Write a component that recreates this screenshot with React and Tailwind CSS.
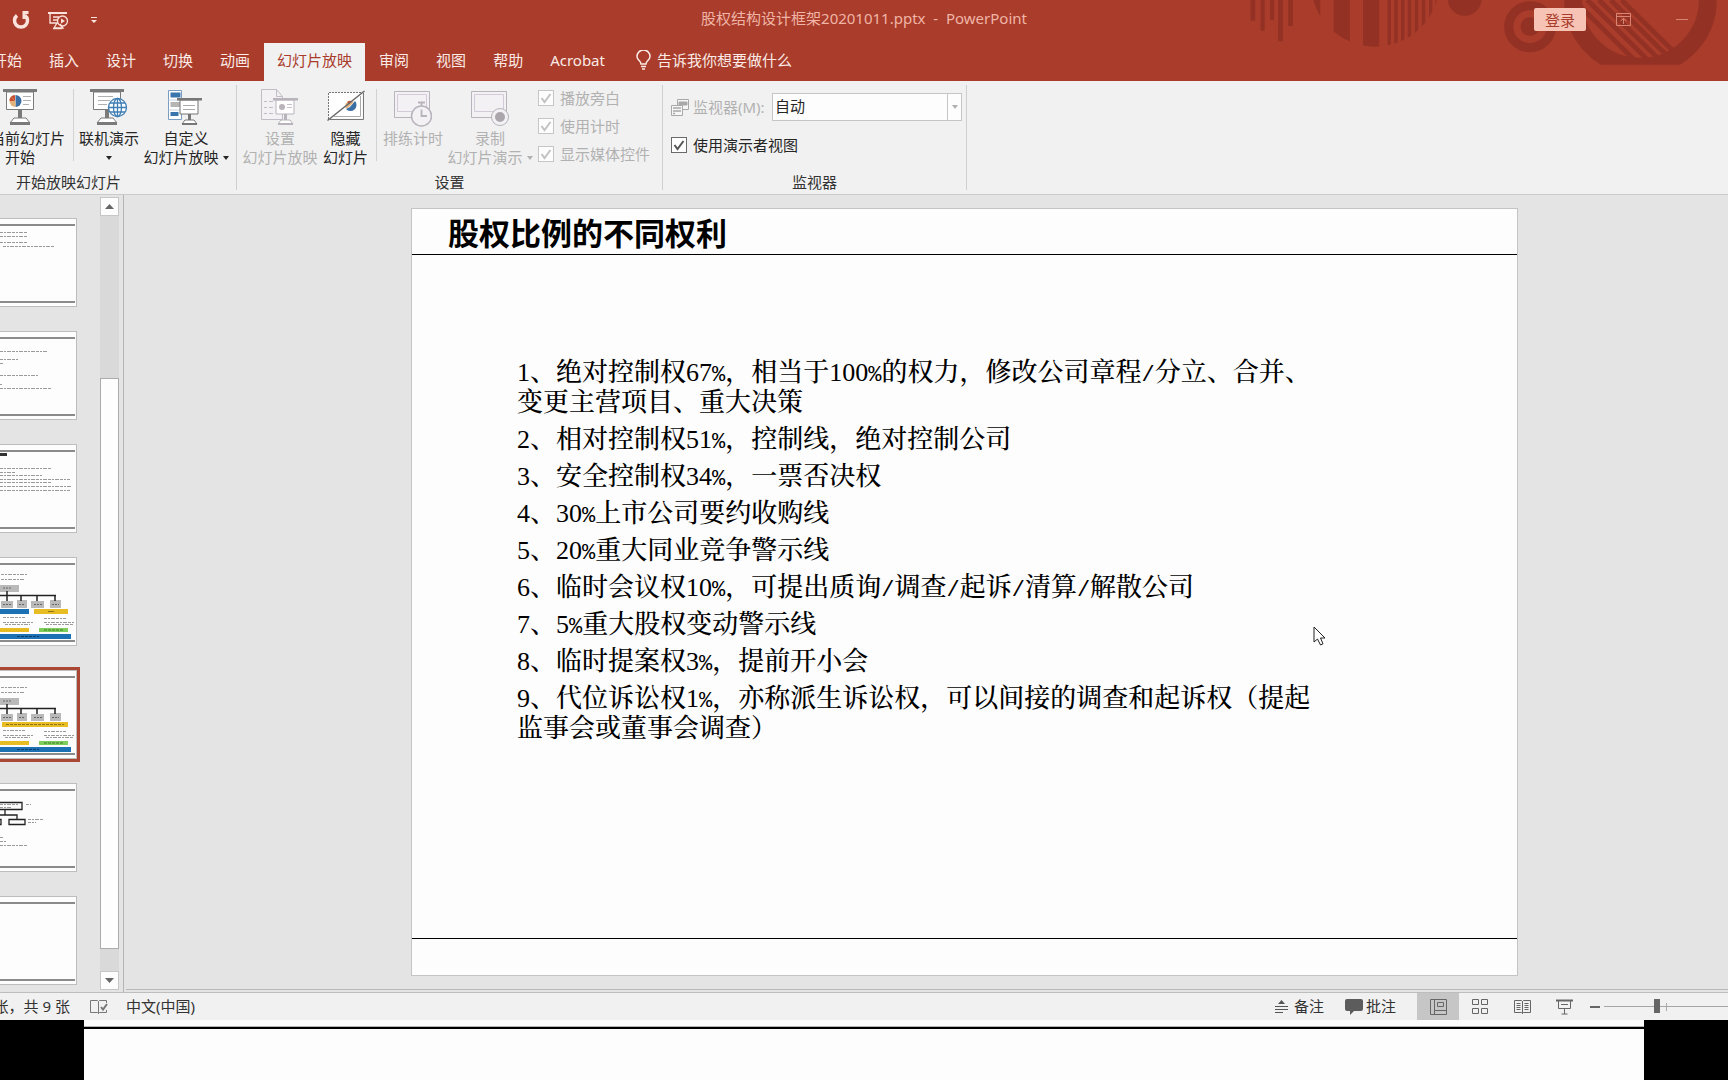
import { useState } from 'react';

const TABS = ['开始', '插入', '设计', '切换', '动画', '幻灯片放映', '审阅', '视图', '帮助', 'Acrobat'];

const POINTS = [
  '1、绝对控制权67%，相当于100%的权力，修改公司章程/分立、合并、变更主营项目、重大决策',
  '2、相对控制权51%，控制线，绝对控制公司',
  '3、安全控制权34%，一票否决权',
  '4、30%上市公司要约收购线',
  '5、20%重大同业竞争警示线',
  '6、临时会议权10%，可提出质询/调查/起诉/清算/解散公司',
  '7、5%重大股权变动警示线',
  '8、临时提案权3%，提前开小会',
  '9、代位诉讼权1%，亦称派生诉讼权，可以间接的调查和起诉权（提起监事会或董事会调查）',
];

// Half-width percent sign and slash, as in a Song typeface
const Point = ({ text }) => (
  <li>
    {text.split(/([%/])/).map((part, i) =>
      part === '%' || part === '/' ? (
        <span key={i} className="font-['Liberation_Mono'] text-[22px] leading-[16px] font-normal">{part}</span>
      ) : (
        part
      )
    )}
  </li>
);

const HeaderArt = () => (
  <svg className="absolute top-0 right-0" width="528" height="66" viewBox="0 0 1568 198" preserveAspectRatio="none" fill="#933124" aria-hidden="true">
    <defs>
      <clipPath id="disc"><circle cx="520" cy="-50" r="190" /></clipPath>
      <clipPath id="wheel"><circle cx="1308" cy="5" r="176" /></clipPath>
      <clipPath id="band"><rect x="1000" y="0" width="568" height="194" /></clipPath>
    </defs>
    <path d="M150 0h14v62h-14zM180 0h12v92h-12zM208 0h12v60h-12zM232 0h14v124h-14zM262 0h14v78h-14z" />
    <path clipPath="url(#disc)" d="M330 0h27v140h-27zM397 0h48v140h-48zM484 0h48v160h-48zM557 0h10v160h-10zM577 0h10v160h-10zM597 0h10v160h-10zM617 0h10v160h-10zM638 0h10v160h-10zM659 0h10v160h-10zM680 0h10v160h-10zM699 0h10v160h-10z" />
    <circle cx="786" cy="-3" r="50" />
    <circle cx="980" cy="80" r="28" />
    <circle cx="980" cy="80" r="63" fill="none" stroke="#933124" strokeWidth="27" />
    <g clipPath="url(#band)">
      <circle cx="1308" cy="0" r="200" fill="none" stroke="#933124" strokeWidth="53" />
      <g clipPath="url(#wheel)" stroke="#933124" strokeWidth="14">
        <path d="M1110 0L1300 190M1150 0L1335 185M1185 0L1370 185M1220 0L1405 185M1252 0L1437 185" />
      </g>
    </g>
  </svg>
);

const Board = ({ children }) => (
  <g>
    <path d="M3.500 3h27v17.500h-27z" fill="#fff" stroke="#7a7a7a" />
    <path d="M0 0h34v3H0z" fill="#7a7a7a" />
    <path d="M15 21h4v8h-4z" fill="#7a7a7a" />
    <path d="M11 29h12l4 5H7z" fill="#fff" stroke="#7a7a7a" />
    <path d="M7 33h20v3H7z" fill="#7a7a7a" />
    {children}
  </g>
);

const FromCurrentIcon = () => (
  <svg width="34" height="36" viewBox="0 0 34 36">
    <Board>
      <path d="M12 12L8 7.500A6 6 0 0 1 12 6z" fill="#c8502f" />
      <path d="M12 12H6.500a6 6 0 0 1 1.500-4.500z" fill="#c8502f" />
      <path d="M12.500 12V6a6 6 0 0 1 0 12z" fill="#3a6ea5" />
      <path d="M12.500 12v6a6 6 0 0 1-6-6z" fill="#e3b27a" />
      <path d="M20 7.500h8M20 11.500h8M20 15.500h6" stroke="#b0b0b0" />
    </Board>
  </svg>
);

const OnlineIcon = () => (
  <svg width="38" height="36" viewBox="0 0 38 36">
    <Board>
      <path d="M8 7.500h15M8 11.500h12M8 15.500h9" stroke="#b0b0b0" />
    </Board>
    <g fill="#fff" stroke="#3f7fb5" strokeWidth="1.300">
      <circle cx="27.500" cy="18.500" r="9" />
      <ellipse cx="27.500" cy="18.500" rx="4" ry="9" fill="none" />
      <path d="M18.500 18.500h18M27.500 9.500v18M20 14h15M20 23h15" />
    </g>
  </svg>
);

const SmallBoard = ({ x, y, stroke, children }) => (
  <g transform={`translate(${x} ${y})`}>
    <path d="M3 2h18v14H3z" fill="#fff" stroke={stroke} />
    <path d="M0 0h25v2.500H0z" fill={stroke} />
    <path d="M11 16h3v6h-3z" fill={stroke} />
    <path d="M8 22h9l3 4H5z" fill="#fff" stroke={stroke} />
    <path d="M5 25h15v2H5z" fill={stroke} />
    {children}
  </g>
);

const CustomShowIcon = () => (
  <svg width="36" height="36" viewBox="0 0 36 36">
    <path d="M.5 1.500h13v29H.5z" fill="#fff" stroke="#7a9cc0" />
    <path d="M.5 11h13M.5 21h13" stroke="#c5d2e0" />
    <path d="M2.500 3.500h10v5h-10zM2.500 23h8v4h-8z" fill="#3a74ad" />
    <path d="M2.500 13h10v5h-10z" fill="#b5b5b5" />
    <SmallBoard x={9} y={9} stroke="#777">
      <path d="M6 7.500h12M6 11.500h12" stroke="#aaa" />
    </SmallBoard>
  </svg>
);

const SetupIcon = () => (
  <svg width="38" height="36" viewBox="0 0 38 36">
    <path d="M.5.5h15l6 7v23H.5z" fill="#f4f1f5" stroke="#c2bcc6" />
    <path d="M15.500.5v7h6" fill="none" stroke="#c2bcc6" />
    <path d="M3 12.500h3M3 18.500h3M3 24.500h3M8 12.500h4M8 18.500h4M8 24.500h4" stroke="#c2bcc6" />
    <SmallBoard x={12} y={9} stroke="#b9b3bc">
      <circle cx="9" cy="9" r="3" fill="#b9b3bc" />
      <path d="M14 6.500h5M14 9.500h5" stroke="#c8c2cb" />
    </SmallBoard>
  </svg>
);

const HideSlideIcon = () => (
  <svg width="38" height="36" viewBox="0 0 38 36">
    <path d="M1.500 3.500h34v26h-34z" fill="#fff" />
    <path d="M1.500 30V3.500H34" fill="none" stroke="#777" strokeDasharray="2 1" />
    <path d="M36.500 4v26.500H3" fill="none" stroke="#777" />
    <path d="M33.500 7v20.500H7" fill="none" stroke="#aaa" />
    <path d="M23 18l5-6a5.500 5.500 0 1 1-9 8z" fill="#3a6ea5" />
    <path d="M24 12l3 1-4 4-4 3a6 6 0 0 1 0-6z" fill="#e3b27a" />
    <path d="M20 13a5 5 0 0 1 5-1l-3 3z" fill="#c8502f" />
    <path d="M.5 31.500L37.500 2" stroke="#666" strokeWidth="1.500" />
  </svg>
);

const RehearseIcon = () => (
  <svg width="38" height="38" viewBox="0 0 38 38" fill="#f3f1f4" stroke="#b9b3bc">
    <path d="M.5 2.500h35v26H.5z" />
    <path d="M3.500 5.500h29v17h-29z" stroke="#d3cad9" />
    <circle cx="27.500" cy="27" r="10" strokeWidth="1.500" />
    <path d="M24 13.500h7M27.500 14v3M27.500 20.500V27h5.500" fill="none" strokeWidth="1.800" />
  </svg>
);

const RecordIcon = () => (
  <svg width="38" height="38" viewBox="0 0 38 38" fill="#f3f1f4" stroke="#b9b3bc">
    <path d="M.5 2.500h35v26H.5z" />
    <path d="M3.500 5.500h29v17h-29z" stroke="#d3cad9" />
    <circle cx="29" cy="28" r="8.500" />
    <circle cx="29" cy="28" r="5" fill="#aaa6ac" stroke="none" />
  </svg>
);

const Arrow = () => (
  <svg className="inline-block" width="6" height="4" viewBox="0 0 6 4" fill="currentColor"><path d="M0 0h6L3 4z" /></svg>
);

const BigButton = ({ icon, lines, arrow, disabled, className }) => (
  <button disabled={disabled} className={`flex shrink-0 flex-col items-center text-[15px] leading-[19px] whitespace-nowrap text-[#262626] disabled:text-[#b1b1b1] ${className}`}>
    <span className="flex h-10 items-start">{icon}</span>
    <span>{lines[0]}</span>
    <span className="flex h-[19px] items-center gap-1">
      {lines[1]}
      {arrow && <Arrow />}
    </span>
  </button>
);

const Check = ({ label, checked, disabled, onChange }) => (
  <label className={`flex items-center gap-1.5 text-[15px] leading-5 whitespace-nowrap ${disabled ? 'text-[#b1b1b1]' : 'text-[#262626]'}`}>
    <span className="relative flex size-4">
      <input
        type="checkbox"
        checked={checked}
        disabled={disabled}
        onChange={onChange}
        className="peer size-4 appearance-none border border-[#6a6a6a] bg-[#fdfdfd] disabled:border-[#c6c6c6]"
      />
      <svg className="pointer-events-none absolute inset-0 hidden peer-checked:block" width="16" height="16" viewBox="0 0 16 16" fill="none" stroke={disabled ? '#c2c2c2' : '#555'} strokeWidth="2">
        <path d="M3.500 8l3 4 6-8" />
      </svg>
    </span>
    {label}
  </label>
);

const Group = ({ title, className, children }) => (
  <section className={`mt-1 mb-1 flex shrink-0 flex-col border-r border-[#cfcfcf] ${className}`}>
    {children}
    <h2 className="mt-auto text-center text-[15px] leading-4 text-[#333]">{title}</h2>
  </section>
);

const Divider = () => <span className="h-[72px] w-px shrink-0 bg-[#d2d2d2]" />;

// Miniature slides, cut off by the window's left edge
const Greek = ({ rows }) => (
  <g stroke="#9a9a9a" strokeDasharray="3 1 2 1 4 1" fill="none">
    {rows.map(([x, y, x2], i) => <path key={i} d={`M${x} ${y}.500H${x2}`} />)}
  </g>
);

const Chart = ({ merged }) => (
  <>
    <Greek rows={[[1, 16, 27], [1, 21, 24]]} />
    <path d="M0 27h19v7H0zM1 43h12v7H1zM17 42h10v8H17zM31 43h13v7H31zM50 42h11v8H50z" fill="#b9b9b9" />
    <path d="M7 33v4M0 37.500h56M7 37v6M21 37v6M37 37v6M55 37v6" stroke="#222" strokeWidth="1.500" fill="none" />
    <path d="M3 30h8M3 46.500h8M19 46.500h6M34 46.500h8M52 46.500h7" stroke="#666" strokeDasharray="2 1" />
    {merged ? (
      <>
        <path d="M2 51h66v5H2z" fill="#e8bd23" />
        <path d="M6 53.500h58" stroke="#8f7420" strokeDasharray="3 1" />
      </>
    ) : (
      <>
        <path d="M0 51h29v5H0z" fill="#1c71b5" />
        <path d="M34 51h34v5H34z" fill="#e8bd23" />
        <path d="M48 53.500h6" stroke="#8f7420" />
      </>
    )}
    <Greek rows={[[3, 59, 25], [3, 64, 34], [5, 66, 30], [44, 60, 66], [44, 64, 74], [46, 66, 74]]} />
    <path d="M0 70h29v4H0z" fill="#e8bd23" />
    <path d="M39 70h29v4H39z" fill="#7fce5b" />
    <path d="M44 72h20" stroke="#3f7a2a" strokeDasharray="3 1" />
    <path d="M0 76h71v5H0z" fill="#1c71b5" />
    <path d="M17 78.500h22" stroke="#0d3f6b" strokeDasharray="3 1" />
  </>
);

const OrgBoxes = () => (
  <>
    <path d="M0 18.500h22v7H0M5 26v5M0 31h17v4M0 35.500h1v5H0M9 35.500h16v5H9z" fill="none" stroke="#222" strokeWidth="1.300" />
    <Greek rows={[[0, 20, 19], [0, 23, 11], [26, 20, 31], [28, 35, 44], [28, 38, 36], [0, 53, 4], [0, 57, 7], [0, 61, 27]]} />
  </>
);

const SLIDES = [
  <Greek rows={[[0, 13, 28], [0, 17, 28], [0, 23, 28], [3, 27, 55]]} />,
  <Greek rows={[[0, 19, 48], [0, 27, 18], [0, 31, 3], [0, 43, 38], [0, 52, 2], [0, 56, 51]]} />,
  <>
    <path d="M0 9.500h7" stroke="#333" strokeWidth="3" />
    <Greek rows={[[0, 23, 52], [0, 27, 16], [0, 30, 43], [0, 34, 70], [0, 37, 52], [0, 41, 72], [0, 45, 70]]} />
  </>,
  <Chart />,
  <Chart merged />,
  <OrgBoxes />,
  null,
];

const Thumb = ({ active, index, onClick, children }) => (
  <button
    aria-label={`${index + 1}`}
    onClick={onClick}
    className={`h-[89px] w-[77px] shrink-0 border-y border-r border-[#bdbdbd] bg-[#fdfdfd] ${active ? 'ring-3 ring-[#a94634]' : ''}`}
  >
    <svg className="block" width="76" height="87" viewBox="0 0 76 87">
      <path d="M0 6h75M0 83h75" stroke="#1a1a1a" strokeWidth="1.200" />
      {children}
    </svg>
  </button>
);

export default function App() {
  const [tab, setTab] = useState('幻灯片放映');
  const [current, setCurrent] = useState(4);
  const [presenter, setPresenter] = useState(true);
  const [zoom, setZoom] = useState(42);

  return (
    <div className="flex h-screen flex-col overflow-hidden bg-[#e4e4e4] font-['Noto_Sans','Noto_Sans_CJK_SC',sans-serif]">
      <header className="relative flex h-[81px] shrink-0 flex-col bg-[#a93c2b] text-[#fbeae5]">
        <HeaderArt />
        <div className="relative flex h-[43px] items-start">
          <div className="flex flex-1 items-center gap-4 pt-2.5 pr-7 pl-3">
            <button aria-label="重复">
              <svg width="19" height="20" viewBox="0 0 19 20" fill="none" stroke="#fbe3dc" strokeWidth="3.500">
                <path d="M5 5.500a6.500 6.500 0 1 0 8 0" />
                <path d="M10.500 2.500h6v0M12 2v7" strokeWidth="3" />
              </svg>
            </button>
            <button aria-label="从头开始">
              <svg width="22" height="20" viewBox="0 0 22 20" fill="none" stroke="#fbe3dc" strokeWidth="1.300">
                <path d="M1 3h19" strokeWidth="2" />
                <path d="M3 3v10h8M6 7h6M6 10h4M10 13l-3 5h9l-3-4M6 18.500h9" />
                <circle cx="15.500" cy="11" r="5" />
                <path d="M14 8.500v5l4-2.500z" fill="#fbe3dc" stroke="none" />
              </svg>
            </button>
            <button aria-label="自定义快速访问工具栏" className="pl-1.5">
              <svg width="6" height="8" viewBox="0 0 6 8" fill="#fbe3dc"><path d="M0 1h6v1H0zM0 4h6L3 7z" /></svg>
            </button>
          </div>
          <h1 className="pt-2 text-[15px] leading-5 whitespace-pre text-[#f0b5a6]">股权结构设计框架20201011.pptx  -  PowerPoint</h1>
          <div className="flex flex-1 items-center justify-end gap-[30px] pt-2 pr-10">
            <button className="h-[23px] rounded-xs bg-[#f6c3b5] px-[11px] text-[15px] leading-[22px] text-[#a93c2b]">登录</button>
            <button aria-label="功能区显示选项">
              <svg width="15" height="13" viewBox="0 0 15 13" fill="none" stroke="#d98574"><path d="M.5.5h14v12H.5zM.5 3.500h14M7.500 11V5.500M4.500 8l3-2.500 3 2.500" /></svg>
            </button>
            <button aria-label="最小化" className="ml-[15px] h-px w-3 bg-[#d98574]" />
          </div>
        </div>
        <nav className="relative flex h-[38px] overflow-hidden">
          <div className="-ml-[21px] flex gap-px">
            {TABS.map((name) => (
              <button
                key={name}
                onClick={() => setTab(name)}
                className={`px-[13px] pb-1 text-[15px] whitespace-nowrap ${tab === name ? 'bg-[#f1f1f1] text-[#a93c2b]' : ''}`}
              >
                {name}
              </button>
            ))}
          </div>
          <button className="flex items-center gap-1.5 pb-1 pl-[18px] text-[15px] whitespace-nowrap">
            <svg width="15" height="20" viewBox="0 0 15 20" fill="none" stroke="#fbeae5" strokeWidth="1.500">
              <path d="M5 14c0-3-4-4-4-7.500a6.500 6.500 0 0 1 13 0C14 10 10 11 10 14zM5 16.500h5M6 19h3" />
            </svg>
            告诉我你想要做什么
          </button>
        </nav>
      </header>

      <div className="flex h-[114px] shrink-0 overflow-hidden border-b border-[#cbcbcb] bg-[#f1f1f1]">
        <Group title="开始放映幻灯片" className="-ml-[99px] w-[336px]">
          <div className="flex justify-end pt-1 pr-[5px]">
            <BigButton icon={<FromCurrentIcon />} lines={['从当前幻灯片', '开始']} className="mr-2 w-[90px]" />
            <Divider />
            <BigButton icon={<OnlineIcon />} lines={['联机演示', '']} arrow className="mr-px ml-1 w-[62px]" />
            <BigButton icon={<CustomShowIcon />} lines={['自定义', '幻灯片放映']} arrow className="w-[90px]" />
          </div>
        </Group>
        <Group title="设置" className="w-[426px]">
          <div className="flex pt-1 pl-1">
            <BigButton icon={<SetupIcon />} lines={['设置', '幻灯片放映']} disabled className="w-[78px]" />
            <BigButton icon={<HideSlideIcon />} lines={['隐藏', '幻灯片']} className="mr-1 w-[53px]" />
            <Divider />
            <BigButton icon={<RehearseIcon />} lines={['排练计时', '']} disabled className="ml-1 w-[64px]" />
            <BigButton icon={<RecordIcon />} lines={['录制', '幻灯片演示']} arrow disabled className="w-[90px]" />
            <div className="-mt-px flex flex-col gap-2 pl-[3px]">
              <Check label="播放旁白" checked disabled />
              <Check label="使用计时" checked disabled />
              <Check label="显示媒体控件" checked disabled />
            </div>
          </div>
        </Group>
        <Group title="监视器" className="w-[304px]">
          <div className="flex flex-col items-start gap-3.5 pt-2 pl-2">
            <div className="flex items-center text-[15px] text-[#b1b1b1]">
              <svg width="18" height="17" viewBox="0 0 18 17" fill="#f6f6f6" stroke="#a8a8a8">
                <path d="M6.500.5h11v10h-11z" /><path d="M8 3h8v3H8z" fill="#a8a8a8" />
                <path d="M.5 6.500h11v10H.5z" /><path d="M2 9h8M2 12h8M2 14.500h2" strokeWidth="1.500" />
              </svg>
              <label htmlFor="monitor" className="w-[83px] pl-1 whitespace-nowrap">监视器(M):</label>
              <span className="relative flex">
                <select id="monitor" className="h-7 w-[190px] appearance-none border border-[#c6c6c6] bg-[#fdfdfd] px-0.5 pb-0.5 text-[15px] text-[#262626]">
                  <option>自动</option>
                </select>
                <span className="pointer-events-none absolute inset-y-0 right-0 flex w-[15px] items-center justify-center border-l border-[#c6c6c6] text-[#b0b0b0]"><Arrow /></span>
              </span>
            </div>
            <Check label="使用演示者视图" checked={presenter} onChange={() => setPresenter(!presenter)} />
          </div>
        </Group>
      </div>

      <div className="flex min-h-0 flex-1">
        <aside className="flex shrink-0 border-r border-[#b5b5b5] pt-0.5 pr-1">
          <div className="flex w-[100px] flex-col gap-6 overflow-hidden pt-[21px]">
            {SLIDES.map((art, i) => (
              <Thumb key={i} index={i} active={current === i} onClick={() => setCurrent(i)}>{art}</Thumb>
            ))}
          </div>
          <div className="mb-0.5 flex w-[19px] flex-col bg-[#d9d9d9]">
            <button aria-label="向上" className="flex h-[19px] items-center justify-center border border-[#c6c6c6] bg-[#fdfdfd]">
              <svg width="9" height="5" viewBox="0 0 9 5" fill="#666"><path d="M0 5h9L4.500 0z" /></svg>
            </button>
            <div className="flex-[162]" />
            <div className="flex-[570] border border-[#ababab] bg-[#fdfdfd]" />
            <div className="flex-[22]" />
            <button aria-label="向下" className="flex h-[19px] items-center justify-center border border-[#c6c6c6] bg-[#fdfdfd]">
              <svg width="9" height="5" viewBox="0 0 9 5" fill="#666"><path d="M0 0h9L4.500 5z" /></svg>
            </button>
          </div>
        </aside>

        <main className="mb-0.5 ml-0.5 flex flex-1 border-b border-[#b9b9b9] pt-[13px] pr-[210px] pb-[13px] pl-[285px]">
          <article className="relative flex flex-1 flex-col border border-[#c4c4c4] bg-[#fdfdfd] text-black">
            <h2 className="border-b border-black pt-1 pb-px pl-9 text-[31px] leading-[40px] font-bold">股权比例的不同权利</h2>
            <ul className="flex flex-1 flex-col gap-[7px] pt-[103px] pr-[192px] pl-[105px] font-['Liberation_Serif','Noto_Serif_CJK_SC','Noto_Sans_CJK_SC',serif] text-[26px] leading-[30px] font-medium">
              {POINTS.map((text) => <Point key={text} text={text} />)}
            </ul>
            <div className="h-[37px] border-t border-black" />
            <svg className="absolute top-[417px] right-[191px]" width="13" height="20" viewBox="0 0 13 20" fill="#fff" stroke="#222">
              <path d="M1 1v15l3.500-3 3 6 2.500-1.200L7.500 12H12z" />
            </svg>
          </article>
        </main>
      </div>

      <footer className="flex h-[28px] shrink-0 items-center border-t border-[#bdbdbd] bg-[#f1f1f1] text-[15px] whitespace-nowrap text-[#333]">
        <div className="flex w-[70px] justify-end overflow-hidden">幻灯片 第 5 张，共 9 张</div>
        <button aria-label="拼写检查" className="ml-5">
          <svg width="18" height="16" viewBox="0 0 18 16" fill="none" stroke="#777">
            <path d="M8.500 2.500L7.500 1.500H.5v12h7l1 1 1-1h7V11M8.500 2.500v12M8.500 2.500l1-1h7V4" />
            <path d="M11 8l2 2.500L17 5" strokeWidth="2" />
          </svg>
        </button>
        <button className="ml-[18px]">中文(中国)</button>
        <button className="ml-auto flex items-center gap-1.5">
          <svg width="13" height="14" viewBox="0 0 13 14" fill="#555"><path d="M3 4h7L6.500 0zM0 6h13v1H0zM0 9h13v1H0zM0 12h8v1H0z" /></svg>
          备注
        </button>
        <button className="ml-[21px] flex items-center gap-[3px]">
          <svg width="18" height="16" viewBox="0 0 18 16" fill="#5c5c5c"><path d="M2 0h14a2 2 0 0 1 2 2v8a2 2 0 0 1-2 2H9l-4 4v-4H2a2 2 0 0 1-2-2V2a2 2 0 0 1 2-2z" /></svg>
          批注
        </button>
        <div className="ml-[21px] flex h-full">
          <button aria-label="普通视图" className="flex w-[42px] items-center justify-center bg-[#c6c6c6]">
            <svg width="17" height="16" viewBox="0 0 17 16" fill="none" stroke="#666"><path d="M.5.5h16v15H.5zM4.500.5v15M4.500 11.500h12M7.500 3.500h6v4h-6z" /></svg>
          </button>
          <button aria-label="幻灯片浏览" className="flex w-[42px] items-center justify-center">
            <svg width="16" height="16" viewBox="0 0 16 16" fill="none" stroke="#666"><path d="M.5.5h6v5h-6zM9.500.5h6v5h-6zM.5 9.500h6v5h-6zM9.500 9.500h6v5h-6z" /></svg>
          </button>
          <button aria-label="阅读视图" className="flex w-[42px] items-center justify-center">
            <svg width="17" height="16" viewBox="0 0 17 16" fill="none" stroke="#666"><path d="M.5 1.500h7l1 1 1-1h7v12h-7l-1 1-1-1h-7zM8.500 2v13M2.500 4.500h4M2.500 6.500h4M2.500 8.500h4M2.500 10.500h4M10.500 4.500h4M10.500 6.500h4M10.500 8.500h4M10.500 10.500h4" /></svg>
          </button>
          <button aria-label="幻灯片放映" className="flex w-[42px] items-center justify-center">
            <svg width="17" height="16" viewBox="0 0 17 16" fill="none" stroke="#666"><path d="M0 1.500h17" strokeWidth="2" /><path d="M2.500 2v7.500h12V2M5 5.500h7M8.500 9.500V15M5.500 15h6" /></svg>
          </button>
        </div>
        <button aria-label="缩小" className="ml-[5px] h-0.5 w-2.5 bg-[#666]" onClick={() => setZoom(zoom - 1)} />
        <div className="relative ml-1 flex w-[124px] items-center">
          <span className="absolute left-1/2 h-2 w-px bg-[#aaa]" />
          <input
            type="range"
            aria-label="缩放"
            value={zoom}
            onChange={(e) => setZoom(Number(e.target.value))}
            className="relative h-3.5 w-full appearance-none bg-transparent [&::-webkit-slider-runnable-track]:h-px [&::-webkit-slider-runnable-track]:bg-[#a6a6a6] [&::-webkit-slider-thumb]:-mt-[7px] [&::-webkit-slider-thumb]:h-3.5 [&::-webkit-slider-thumb]:w-1.5 [&::-webkit-slider-thumb]:appearance-none [&::-webkit-slider-thumb]:bg-[#666]"
          />
        </div>
      </footer>

      <div className="flex h-[60px] shrink-0 bg-black px-[84px]">
        <div className="flex-1 bg-[#fdfdfd] pt-1.5">
          <div className="h-[3px] border-t border-[#b5b5b5] bg-black" />
        </div>
      </div>
    </div>
  );
}
